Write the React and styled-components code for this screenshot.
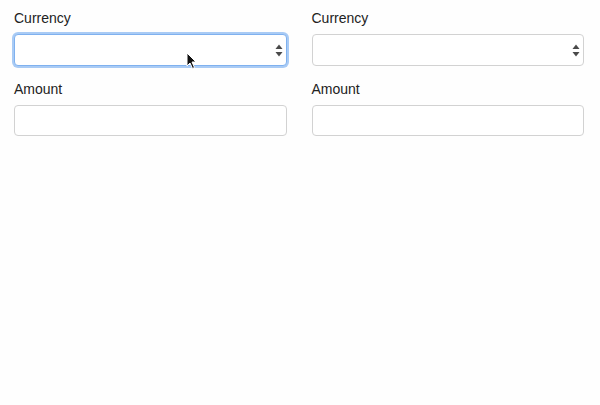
import React from 'react';
import styled, { createGlobalStyle } from 'styled-components';

const GlobalStyle = createGlobalStyle`
  html, body {
    margin: 0;
    background: #fefefe;
  }
  body {
    font-family: "Liberation Sans", Arial, sans-serif;
    color: #1a1a1a;
  }
`;

const Page = styled.div`
  display: grid;
  grid-template-columns: 1fr 1fr;
  column-gap: 25px;
  padding: 8px 16px 0 14px;
  height: 405px;
  box-sizing: border-box;
`;

const Column = styled.div`
  display: flex;
  flex-direction: column;
  gap: 13px;
`;

const Field = styled.div`
  display: flex;
  flex-direction: column;
`;

const Label = styled.label`
  font-size: 14px;
  line-height: 20px;
  margin-bottom: 6px;
  color: #222;
`;

const SelectWrap = styled.div`
  position: relative;
  height: 32px;
`;

const Box = styled.div`
  box-sizing: border-box;
  height: ${(p) => (p.$tall ? 32 : 31)}px;
  border: 1px solid ${(p) => (p.$focused ? '#7fb1ef' : '#d2d2d2')};
  border-radius: 4px;
  background: #fff;
  box-shadow: ${(p) => (p.$focused ? '0 0 0 2px #a9cbf5' : 'none')};
`;

const Arrows = styled.svg`
  position: absolute;
  right: 4px;
  top: 10px;
`;

const Cursor = styled.svg`
  position: absolute;
  left: 172px;
  top: 18px;
`;

const SelectBox = ({ focused, children }) => (
  <SelectWrap>
    <Box $tall $focused={focused} />
    <Arrows width="8" height="13" viewBox="0 0 8 13">
      <path d="M4 0.5 L7.5 5 L0.5 5 Z" fill="#4a4a4a" />
      <path d="M4 12.5 L7.5 8 L0.5 8 Z" fill="#4a4a4a" />
    </Arrows>
    {children}
  </SelectWrap>
);

const Form = ({ withCursor }) => (
  <Column>
    <Field>
      <Label>Currency</Label>
      <SelectBox focused={withCursor}>
        {withCursor && (
          <Cursor width="12" height="18" viewBox="0 0 12 18">
            <path d="M1 1 L1 14 L4 11 L6.5 16.5 L8.5 15.5 L6 10 L10 10 Z" fill="#111" stroke="#fff" strokeWidth="1" />
          </Cursor>
        )}
      </SelectBox>
    </Field>
    <Field>
      <Label>Amount</Label>
      <Box />
    </Field>
  </Column>
);

const App = () => (
  <>
    <GlobalStyle />
    <Page>
      <Form withCursor />
      <Form />
    </Page>
  </>
);

export default App;
